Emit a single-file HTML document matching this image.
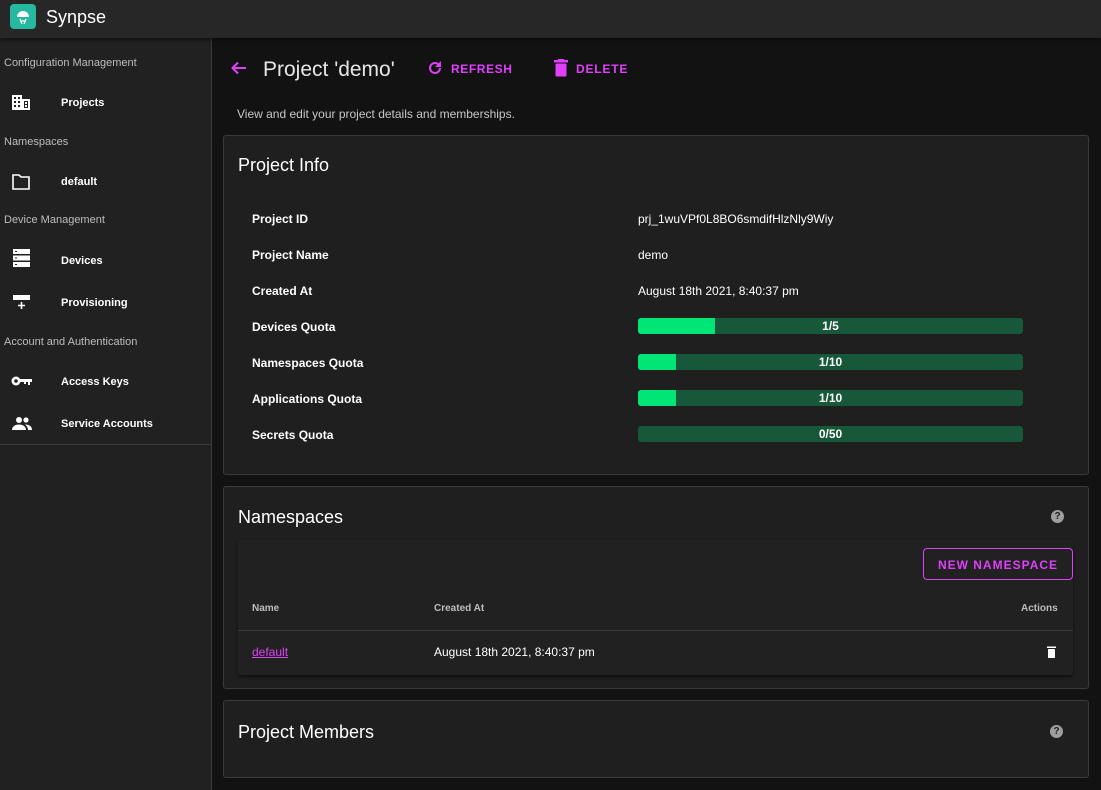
<!DOCTYPE html>
<html><head><style>
*{box-sizing:border-box;margin:0;padding:0}
body{width:1101px;height:790px;overflow:hidden;background:#121212;font-family:"Liberation Sans",sans-serif;color:#fff;position:relative}
.top{position:absolute;left:0;top:0;width:1101px;height:38px;background:#272727;box-shadow:0 2px 4px rgba(0,0,0,.5);z-index:2}
.side{position:absolute;left:0;top:38px;width:212px;height:752px;background:#212121;border-right:1px solid #3a3a3a}
.sec{position:absolute;left:4px;font-size:11px;color:#bdbdbd}
.it{position:absolute;left:61px;font-size:11px;font-weight:bold;color:#fff}
.ic{position:absolute;left:11px}
.a{position:absolute}
.card{position:absolute;left:223px;width:866px;background:#1f1f1f;border:1px solid #3a3a3a;border-radius:3px}
.lbl{position:absolute;left:252px;font-size:12px;font-weight:bold}
.val{position:absolute;left:638px;font-size:12px}
.bar{position:absolute;left:638px;width:385px;height:16px;background:#17583a;border-radius:3px;overflow:hidden;font-size:12px;font-weight:bold;text-align:center;line-height:17px}
.bar i{position:absolute;left:0;top:0;height:16px;background:#00e676}
.bar span{position:relative}
.mag{color:#e040fb;font-weight:bold;letter-spacing:1px;font-size:12px}
.q{position:absolute;width:13px;height:13px;border-radius:50%;background:#9e9e9e;color:#1f1f1f;font-size:10px;font-weight:bold;text-align:center;line-height:13px}
</style></head><body>
<div class="top">
 <div class="a" style="left:10px;top:4px;width:26px;height:25px;background:#26b9a0;border-radius:4px"></div>
 <svg class="a" style="left:13px;top:7px" width="20" height="19" viewBox="0 0 20 19"><path d="M4 10a6 6 0 0 1 12 0z" fill="#fff"/><path d="M7 12l2 5M13 12l-2 5M8 14h4" stroke="#fff" stroke-width="1.2"/></svg>
 <div class="a" style="left:46px;top:7px;font-size:18px;color:#fff">Synpse</div>
</div>
<div class="side">
 <div class="sec" style="top:19px">Configuration Management</div>
 <svg class="ic" style="top:56px" width="20" height="16" viewBox="0 0 20 16"><path d="M1 1h10v4h8v11H1z" fill="#fff"/><g fill="#212121"><rect x="3" y="3" width="2" height="2"/><rect x="7" y="3" width="2" height="2"/><rect x="3" y="7" width="2" height="2"/><rect x="7" y="7" width="2" height="2"/><rect x="3" y="11" width="2" height="2"/><rect x="7" y="11" width="2" height="2"/><rect x="13" y="7" width="4" height="7"/></g><rect x="14" y="8" width="2" height="2" fill="#fff"/><rect x="14" y="11" width="2" height="2" fill="#fff"/></svg>
 <div class="it" style="top:59px">Projects</div>
 <div class="sec" style="top:98px">Namespaces</div>
 <svg class="ic" style="top:136px" width="20" height="16" viewBox="0 0 20 16"><path d="M2 1h6l2 2h8v12H2z" fill="none" stroke="#fff" stroke-width="1.6"/></svg>
 <div class="it" style="top:138px">default</div>
 <div class="sec" style="top:176px">Device Management</div>
 <svg class="ic" style="top:210px" width="20" height="20" viewBox="0 0 20 20"><rect x="2" y="1" width="17" height="5" fill="#fff"/><rect x="2" y="7.5" width="17" height="5" fill="#fff"/><rect x="2" y="14" width="17" height="5" fill="#fff"/><g fill="#212121"><rect x="4" y="3" width="2" height="1"/><rect x="4" y="9.5" width="2" height="1"/><rect x="4" y="16" width="2" height="1"/></g></svg>
 <div class="it" style="top:217px">Devices</div>
 <svg class="ic" style="top:256px" width="20" height="16" viewBox="0 0 20 16"><rect x="2" y="1" width="17" height="5" fill="#fff"/><path d="M10.5 8v7M7 11.5h7" stroke="#fff" stroke-width="1.6"/></svg>
 <div class="it" style="top:259px">Provisioning</div>
 <div class="sec" style="top:298px">Account and Authentication</div>
 <svg class="ic" style="top:337px" width="22" height="12" viewBox="0 0 22 12"><circle cx="5" cy="6" r="4.5" fill="#fff"/><circle cx="5" cy="6" r="1.8" fill="#212121"/><path d="M9 4h12v3h-2v3h-2V7h-2v2h-2V7H9z" fill="#fff"/></svg>
 <div class="it" style="top:338px">Access Keys</div>
 <svg class="ic" style="top:377px" width="22" height="16" viewBox="0 0 22 16"><circle cx="8" cy="5" r="3" fill="#fff"/><circle cx="15" cy="5" r="2.6" fill="#fff"/><path d="M1 15c0-4 4-5.5 7-5.5s7 1.5 7 5.5z M14 9.5c3 0 7 1 7 5.5h-4c0-2-1-4-3-5.5z" fill="#fff"/></svg>
 <div class="it" style="top:380px">Service Accounts</div>
 <div class="a" style="left:0;top:406px;width:211px;height:1px;background:#3a3a3a"></div>
</div>

<svg class="a" style="left:230px;top:60px" width="18" height="16" viewBox="0 0 18 16"><path d="M16 8H3M8 2.5L2.5 8 8 13.5" stroke="#e040fb" stroke-width="2" fill="none"/></svg>
<div class="a" style="left:263px;top:58px;font-size:21px;color:#e6e6e6">Project 'demo'</div>
<svg class="a" style="left:427px;top:60px" width="16" height="16" viewBox="0 0 16 16"><path d="M13 8a5 5 0 1 1-1.5-3.6" stroke="#e040fb" stroke-width="2" fill="none"/><path d="M14 1v6h-6z" fill="#e040fb"/></svg>
<div class="a mag" style="left:451px;top:62px;letter-spacing:.6px">REFRESH</div>
<svg class="a" style="left:554px;top:59px" width="14" height="18" viewBox="0 0 14 18"><rect x="0" y="1" width="14" height="2.5" fill="#e040fb"/><rect x="4" y="0" width="6" height="2" fill="#e040fb"/><rect x="1.5" y="4.5" width="11" height="13" rx="1" fill="#e040fb"/></svg>
<div class="a mag" style="left:576px;top:62px;letter-spacing:.8px">DELETE</div>
<div class="a" style="left:237px;top:107px;font-size:12px;color:#c8c8c8">View and edit your project details and memberships.</div>

<div class="card" style="top:135px;height:340px"></div>
<div class="a" style="left:238px;top:155px;font-size:18px">Project Info</div>
<div class="lbl" style="top:212px">Project ID</div><div class="val" style="top:212px">prj_1wuVPf0L8BO6smdifHlzNly9Wiy</div>
<div class="lbl" style="top:248px">Project Name</div><div class="val" style="top:248px">demo</div>
<div class="lbl" style="top:284px">Created At</div><div class="val" style="top:284px">August 18th 2021, 8:40:37 pm</div>
<div class="lbl" style="top:320px">Devices Quota</div><div class="bar" style="top:318px"><i style="width:77px"></i><span>1/5</span></div>
<div class="lbl" style="top:356px">Namespaces Quota</div><div class="bar" style="top:354px"><i style="width:38px"></i><span>1/10</span></div>
<div class="lbl" style="top:392px">Applications Quota</div><div class="bar" style="top:390px"><i style="width:38px"></i><span>1/10</span></div>
<div class="lbl" style="top:428px">Secrets Quota</div><div class="bar" style="top:426px"><span>0/50</span></div>

<div class="card" style="top:486px;height:203px"></div>
<div class="a" style="left:238px;top:507px;font-size:18px">Namespaces</div>
<div class="q" style="left:1051px;top:510px">?</div>
<div class="a" style="left:238px;top:540px;width:835px;height:135px;background:#212121;box-shadow:0 2px 3px rgba(0,0,0,.5);border-radius:3px"></div>
<div class="a" style="left:923px;top:548px;width:150px;height:32px;border:1px solid #e040fb;border-radius:4px;text-align:center;line-height:31px"><span class="mag">NEW NAMESPACE</span></div>
<div class="a" style="left:252px;top:603px;font-size:10px;font-weight:bold;color:#bdbdbd">Name</div>
<div class="a" style="left:434px;top:603px;font-size:10px;font-weight:bold;color:#bdbdbd">Created At</div>
<div class="a" style="left:1021px;top:603px;font-size:10px;font-weight:bold;color:#bdbdbd">Actions</div>
<div class="a" style="left:238px;top:630px;width:835px;height:1px;background:#3c3c3c"></div>
<div class="a" style="left:252px;top:645px;font-size:12px;color:#e040fb;text-decoration:underline">default</div>
<div class="a" style="left:434px;top:645px;font-size:12px">August 18th 2021, 8:40:37 pm</div>
<svg class="a" style="left:1047px;top:646px" width="9" height="12" viewBox="0 0 9 12"><rect x="0" y="0.5" width="9" height="1.5" fill="#fff"/><rect x="1" y="3" width="7" height="9" rx=".8" fill="#fff"/></svg>

<div class="card" style="top:700px;height:78px"></div>
<div class="a" style="left:238px;top:722px;font-size:18px">Project Members</div>
<div class="q" style="left:1050px;top:725px">?</div>
</body></html>
